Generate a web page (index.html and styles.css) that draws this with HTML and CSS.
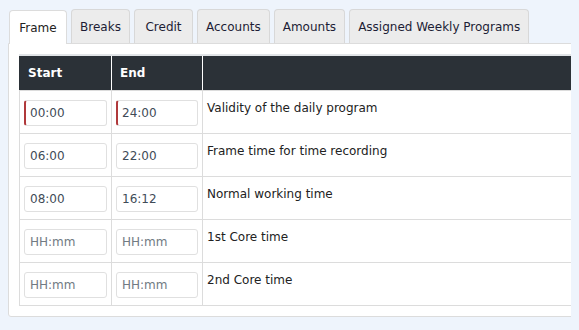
FILE: index.html
```html
<!DOCTYPE html>
<html lang="en">
<head>
    <meta charset="UTF-8">
    <meta name="viewport" content="width=device-width, initial-scale=1.0">
    <title>Daily Program</title>
    <link rel="stylesheet" href="styles.css">
</head>
<body>

<div class="tabs">
    <div class="tab active">Frame</div>
    <div class="tab">Breaks</div>
    <div class="tab">Credit</div>
    <div class="tab">Accounts</div>
    <div class="tab">Amounts</div>
    <div class="tab">Assigned Weekly Programs</div>
</div>

<div class="panel">
    <table class="frame-table">
        <thead>
            <tr>
                <th class="col-start">Start</th>
                <th class="col-end">End</th>
                <th class="col-desc"></th>
            </tr>
        </thead>
        <tbody>
            <tr>
                <td><input class="time invalid" type="text" value="00:00" placeholder="HH:mm"></td>
                <td><input class="time invalid" type="text" value="24:00" placeholder="HH:mm"></td>
                <td class="desc">Validity of the daily program</td>
            </tr>
            <tr>
                <td><input class="time" type="text" value="06:00" placeholder="HH:mm"></td>
                <td><input class="time" type="text" value="22:00" placeholder="HH:mm"></td>
                <td class="desc">Frame time for time recording</td>
            </tr>
            <tr>
                <td><input class="time" type="text" value="08:00" placeholder="HH:mm"></td>
                <td><input class="time" type="text" value="16:12" placeholder="HH:mm"></td>
                <td class="desc">Normal working time</td>
            </tr>
            <tr>
                <td><input class="time" type="text" placeholder="HH:mm"></td>
                <td><input class="time" type="text" placeholder="HH:mm"></td>
                <td class="desc">1st Core time</td>
            </tr>
            <tr>
                <td><input class="time" type="text" placeholder="HH:mm"></td>
                <td><input class="time" type="text" placeholder="HH:mm"></td>
                <td class="desc">2nd Core time</td>
            </tr>
        </tbody>
    </table>
</div>

</body>
</html>
```

FILE: styles.css
```css
html, body {
    overflow: hidden;
}
body {
    margin: 8px;
    font-family: "DejaVu Sans", Verdana, sans-serif;
    font-size: 12px;
    color: #222;
    background-color: #eef4fc;
}
.tabs {
    display: flex;
    align-items: flex-end;
    gap: 4px;
    padding: 1px 0 0 1px;
}
.tab {
    min-width: 59px;
    padding: 10px 8px 9px;
    line-height: 14px;
    text-align: center;
    white-space: nowrap;
    color: #1d1d35;
    background: #ececec;
    border: 1px solid #d8d8d8;
    border-bottom: none;
    border-radius: 4px 4px 0 0;
    box-sizing: border-box;
}
.tab.active {
    position: relative;
    min-width: 58px;
    margin-bottom: -1px;
    color: #222;
    background: #fff;
    border-color: #dcdcdc;
}
.panel {
    width: 640px;
    padding: 10px;
    background: #fff;
    border: 1px solid #dcdcdc;
    border-radius: 0 0 3px 3px;
}
.frame-table {
    width: 100%;
    table-layout: fixed;
    border-spacing: 0;
    border-top: 2px solid #e1e4e7;
}
.frame-table th {
    height: 34px;
    padding: 0 8px;
    box-sizing: border-box;
    text-align: left;
    font-weight: bold;
    color: #fff;
    background: #2b3137;
    border-right: 1px solid #fff;
}
.frame-table th:first-child {
    border-left: 1px solid #2b3137;
}
.frame-table th:last-child {
    border-right: none;
}
.col-start {
    width: 93px;
}
.col-end {
    width: 91px;
}
.frame-table td {
    padding: 9px 4px 7px;
    box-sizing: border-box;
    vertical-align: top;
    line-height: 17px;
    border-top: 1px solid #dcdcdc;
    border-right: 1px solid #dcdcdc;
}
.frame-table td:first-child {
    border-left: 1px solid #dcdcdc;
}
.frame-table tr:last-child td {
    border-bottom: 1px solid #dcdcdc;
}
.desc {
    color: #222;
}
.time {
    display: block;
    width: 100%;
    height: 26px;
    margin: 0;
    padding: 0 5px;
    box-sizing: border-box;
    font-family: "DejaVu Sans", Verdana, sans-serif;
    font-size: 12px;
    color: #3f4b57;
    background: #fff;
    border: 1px solid #e0e0e0;
    border-radius: 3px;
    outline: none;
}
.time::placeholder {
    color: #717a83;
}
.time.invalid {
    padding-left: 4px;
    border-left: 2px solid #b0393b;
}
```
